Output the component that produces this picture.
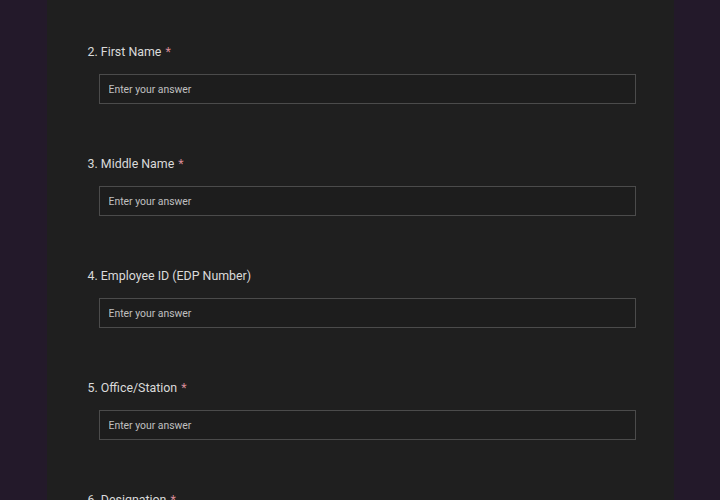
const questions = [
  { n: 2, label: 'First Name', required: true },
  { n: 3, label: 'Middle Name', required: true },
  { n: 4, label: 'Employee ID (EDP Number)', required: false },
  { n: 5, label: 'Office/Station', required: true },
  { n: 6, label: 'Designation', required: true },
];

function Question({ n, label, required }) {
  return (
    <div className="pb-[51px]">
      <div className="h-[18px] text-[12.4px] leading-[18px] text-[#dadada]">
        {n}. {label}
        {required && <span className="ml-[4px] text-[#d98b97]">*</span>}
      </div>
      <div className="mt-[13px] ml-[11px] mr-[38px]">
        <input
          type="text"
          placeholder="Enter your answer"
          className="block h-[30px] w-full border border-[#4b4b4b] bg-[#1d1d1d] px-[9px] text-[10.4px] text-[#d0d0d0] outline-none placeholder:text-[#c0c0c0]"
        />
      </div>
    </div>
  );
}

export default function App() {
  return (
    <div
      className="h-[500px] overflow-hidden bg-[#23192a]"
      style={{ fontFamily: 'Roboto, "Noto Sans", sans-serif' }}
    >
      <div className="mx-auto min-h-[600px] w-[627px] bg-[#1f1f1f] pl-[41px] pt-[43px]">
        {questions.map((q) => (
          <Question key={q.n} {...q} />
        ))}
      </div>
    </div>
  );
}
